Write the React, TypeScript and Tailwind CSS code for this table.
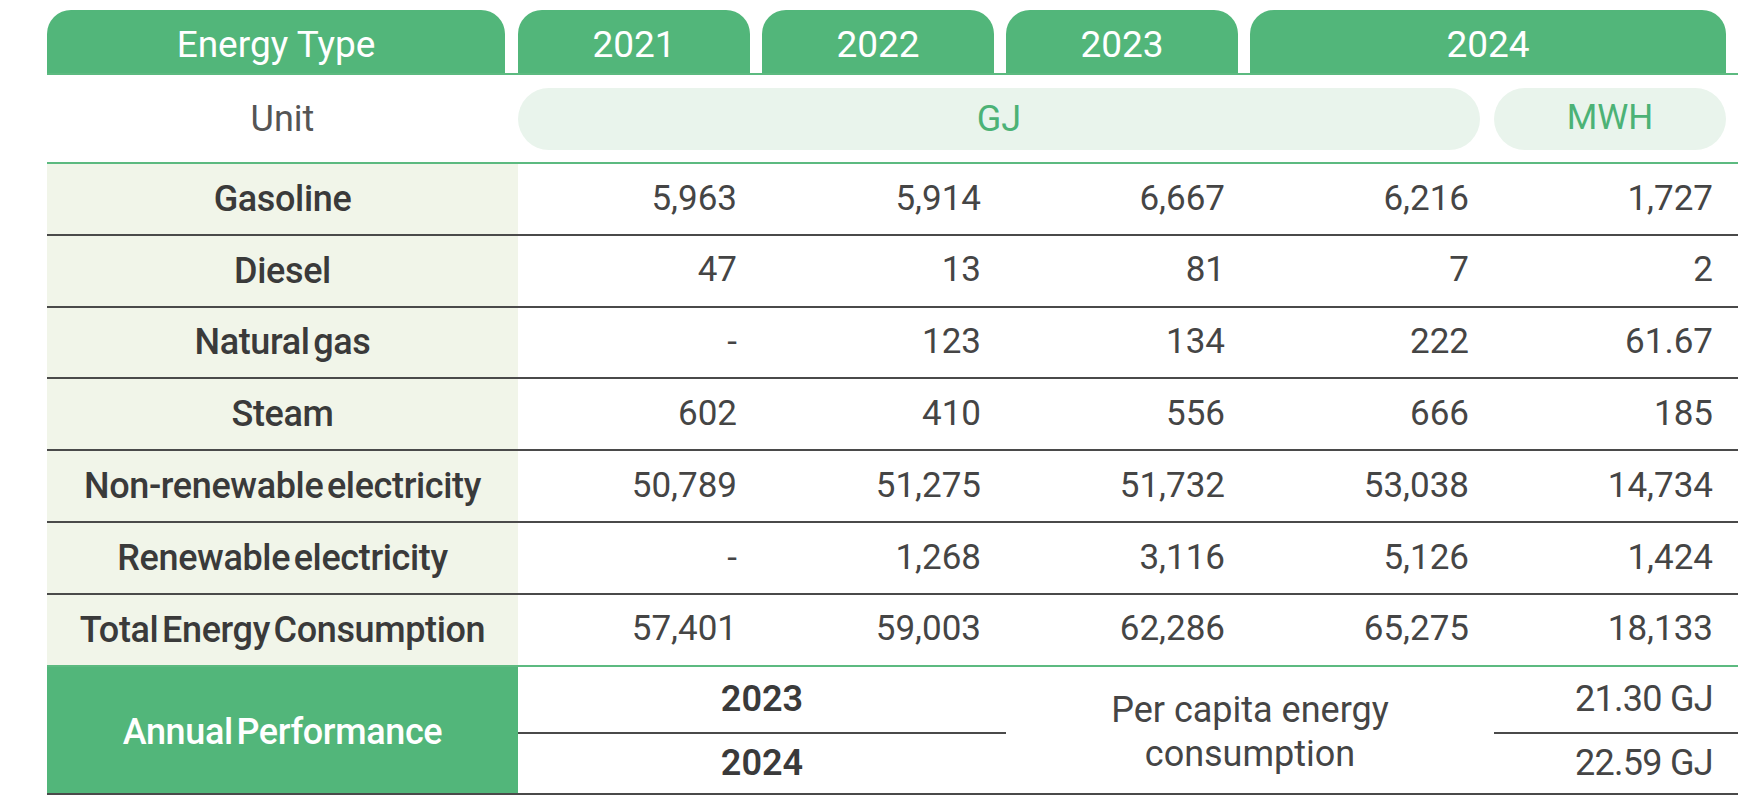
const GREEN = 'bg-[#52b67a]';

const rows: { label: string; values: string[] }[] = [
  { label: 'Gasoline', values: ['5,963', '5,914', '6,667', '6,216', '1,727'] },
  { label: 'Diesel', values: ['47', '13', '81', '7', '2'] },
  { label: 'Natural gas', values: ['-', '123', '134', '222', '61.67'] },
  { label: 'Steam', values: ['602', '410', '556', '666', '185'] },
  { label: 'Non-renewable electricity', values: ['50,789', '51,275', '51,732', '53,038', '14,734'] },
  { label: 'Renewable electricity', values: ['-', '1,268', '3,116', '5,126', '1,424'] },
  { label: 'Total Energy Consumption', values: ['57,401', '59,003', '62,286', '65,275', '18,133'] },
];

const cols = 'grid grid-cols-[471px_244px_244px_244px_244px_244px]';

export default function App() {
  return (
    <div
      className="w-[1761px] h-[811px] bg-white pl-[47px] pt-[10px] text-[#3d3d3d]"
      style={{ fontFamily: 'Roboto, "Noto Sans", sans-serif' }}
    >
      <div className="w-[1691px]">
        {/* header */}
        <div className={`${cols} border-b-[2px] border-[#5cba80]`}>
          {['Energy Type', '2021', '2022', '2023'].map((h, i) => (
            <div key={h} className={i === 0 ? 'pr-[13px]' : 'pr-[12px]'}>
              <div className={`${GREEN} h-[63px] pt-[6px] rounded-t-[24px] flex items-center justify-center text-white text-[37px]`}>
                {h}
              </div>
            </div>
          ))}
          <div className="col-span-2 pr-[12px]">
            <div className={`${GREEN} h-[63px] pt-[6px] rounded-t-[24px] flex items-center justify-center text-white text-[37px]`}>
              2024
            </div>
          </div>
        </div>

        {/* unit */}
        <div className={`${cols} h-[89px] items-center border-b-[2px] border-[#5cba80]`}>
          <div className="text-center text-[36px] text-[#555]">Unit</div>
          <div className="col-span-4 pr-[14px]">
            <div className="h-[62px] rounded-full bg-[#e9f4ec] flex items-center justify-center text-[36px] text-[#4cb276]">GJ</div>
          </div>
          <div className="pr-[12px]">
            <div className="h-[62px] rounded-full bg-[#e9f4ec] flex items-center justify-center text-[35px] text-[#4cb276]">MWH</div>
          </div>
        </div>

        {/* data */}
        {rows.map((r, idx) => (
          <div
            key={r.label}
            className={`${cols} h-[71.8px] border-b-[2px] ${idx === rows.length - 1 ? 'border-[#5cba80]' : 'border-[#4a4a4a]'}`}
          >
            <div className="bg-[#f1f5e9] flex items-center justify-center text-[36px] font-medium tracking-[-0.01em] [word-spacing:-5px] text-[#3a3a3a]">
              {r.label}
            </div>
            {r.values.map((v, i) => (
              <div key={i} className="flex items-center justify-end pr-[25px] text-[35px] text-[#454545]">
                {v}
              </div>
            ))}
          </div>
        ))}

        {/* annual performance */}
        <div className={`${cols} grid-rows-[67px_59px] border-b-[2px] border-[#4a4a4a]`}>
          <div className={`${GREEN} row-span-2 flex items-center justify-center pt-[4px] text-white text-[36px] font-medium tracking-[-0.01em] [word-spacing:-5px]`}>
            Annual Performance
          </div>
          <div className="col-span-2 border-b-[2px] border-[#4a4a4a] flex items-center justify-center text-[36px] font-semibold text-[#3a3a3a]">
            2023
          </div>
          <div className="col-span-2 row-span-2 flex items-center justify-center pt-[4px] text-center text-[36px] leading-[44px] text-[#454545]">
            Per capita energy
            <br />
            consumption
          </div>
          <div className="border-b-[2px] border-[#4a4a4a] flex items-center justify-end pr-[25px] text-[36px] text-[#454545] tracking-[-0.02em]">
            21.30 GJ
          </div>
          <div className="col-span-2 flex items-center justify-center text-[36px] font-semibold text-[#3a3a3a]">
            2024
          </div>
          <div className="flex items-center justify-end pr-[25px] text-[36px] text-[#454545] tracking-[-0.02em]">
            22.59 GJ
          </div>
        </div>
      </div>
    </div>
  );
}
